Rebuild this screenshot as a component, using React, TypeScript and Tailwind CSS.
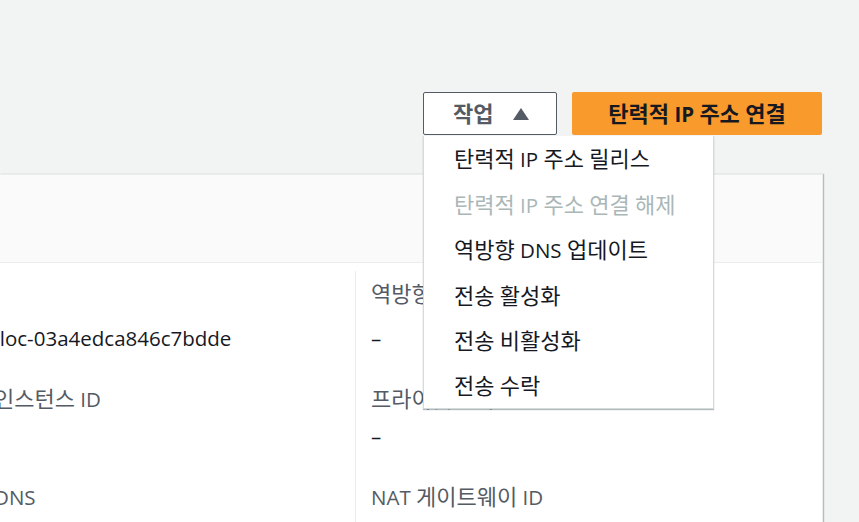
import React from 'react';

const font = { fontFamily: '"Open Sans", "Noto Sans CJK KR", sans-serif' };

const menuItems = [
  { label: '탄력적 IP 주소 릴리스', disabled: false },
  { label: '탄력적 IP 주소 연결 해제', disabled: true },
  { label: '역방향 DNS 업데이트', disabled: false },
  { label: '전송 활성화', disabled: false },
  { label: '전송 비활성화', disabled: false },
  { label: '전송 수락', disabled: false },
];

// hangul in the reference is drawn a little larger than the latin text
function T({ children }: { children: string }) {
  const parts = children.split(/([\uac00-\ud7a3]+)/);
  return (
    <span>
      {parts.map((p, i) =>
        /[\uac00-\ud7a3]/.test(p) ? (
          <span key={i} className="text-[22px]">{p}</span>
        ) : (
          p
        )
      )}
    </span>
  );
}

function CopyIcon() {
  return (
    <svg width="20" height="20" viewBox="0 0 16 16" fill="none" stroke="#545b64" strokeWidth="2">
      <path d="M2 5h9v9H2z" />
      <path d="M5 2h9v9" />
    </svg>
  );
}

export default function App() {
  return (
    <div className="relative w-[859px] h-[522px] overflow-hidden bg-[#f2f3f3] text-[20.5px] text-[#16191f]" style={font}>
      <div className="flex justify-end gap-[15px] pt-[92px] pr-[37px]">
        <button className="flex h-[43px] w-[134px] items-center rounded-[2px] border border-[#545b64] bg-white pl-[29px] font-bold leading-none text-[#545b64]">
          <T>작업</T>
          <svg className="ml-[20px]" width="16" height="12" viewBox="0 0 16 12">
            <path d="M8 0L16 12H0z" fill="#545b64" />
          </svg>
        </button>
        <button className="flex h-[43px] w-[250px] items-center justify-center rounded-[2px] bg-[#f99a2c] font-bold leading-none text-[#16191f]">
          <T>탄력적 IP 주소 연결</T>
        </button>
      </div>

      <div className="mt-[39px] w-[823px] border-t border-r border-[#eaeded] bg-white shadow-[1px_0_1px_rgba(0,28,36,0.25)]">
        <div className="h-[88px] border-b border-[#eaeded] bg-[#fafafa]" />
        <div className="grid grid-cols-[355px_1fr] pt-[8px]">
          <div className="-ml-[72px] pt-[8px] text-[#545b64]">
            <div className="h-[28px] leading-[28px]"><T>할당 ID</T></div>
            <div className="mt-[17px] flex h-[28px] items-center gap-[6px] text-[#16191f]">
              <CopyIcon />
              <span>eipalloc-03a4edca846c7bdde</span>
            </div>
            <div className="mt-[32px] h-[28px] leading-[28px]"><T>연결된 인스턴스 ID</T></div>
            <div className="mt-[10px] h-[28px] leading-[28px] text-[#16191f]">–</div>
            <div className="mt-[32px] h-[28px] leading-[28px]"><T>퍼블릭 DNS</T></div>
          </div>
          <div className="h-[260px] border-l border-[#eaeded] pl-[15px] pt-[8px] text-[#545b64]">
            <div className="h-[28px] leading-[28px]"><T>역방향 DNS 레코드</T></div>
            <div className="mt-[17px] h-[28px] leading-[28px] text-[#16191f]">–</div>
            <div className="mt-[32px] h-[28px] leading-[28px]"><T>프라이빗 IP 주소</T></div>
            <div className="mt-[10px] h-[28px] leading-[28px] text-[#16191f]">–</div>
            <div className="mt-[32px] h-[28px] leading-[28px]"><T>NAT 게이트웨이 ID</T></div>
          </div>
        </div>
      </div>

      <ul className="absolute left-[423px] top-[136px] w-[291px] border border-t-0 border-[#d5dbdb] bg-white shadow-[0_1px_1px_rgba(0,28,36,0.3)]">
        {menuItems.map((item) => (
          <li
            key={item.label}
            className={`flex h-[45.4px] items-center pl-[30px] leading-none ${item.disabled ? 'text-[#aab7b8]' : 'text-[#16191f]'}`}
          >
            <T>{item.label}</T>
          </li>
        ))}
      </ul>
    </div>
  );
}
